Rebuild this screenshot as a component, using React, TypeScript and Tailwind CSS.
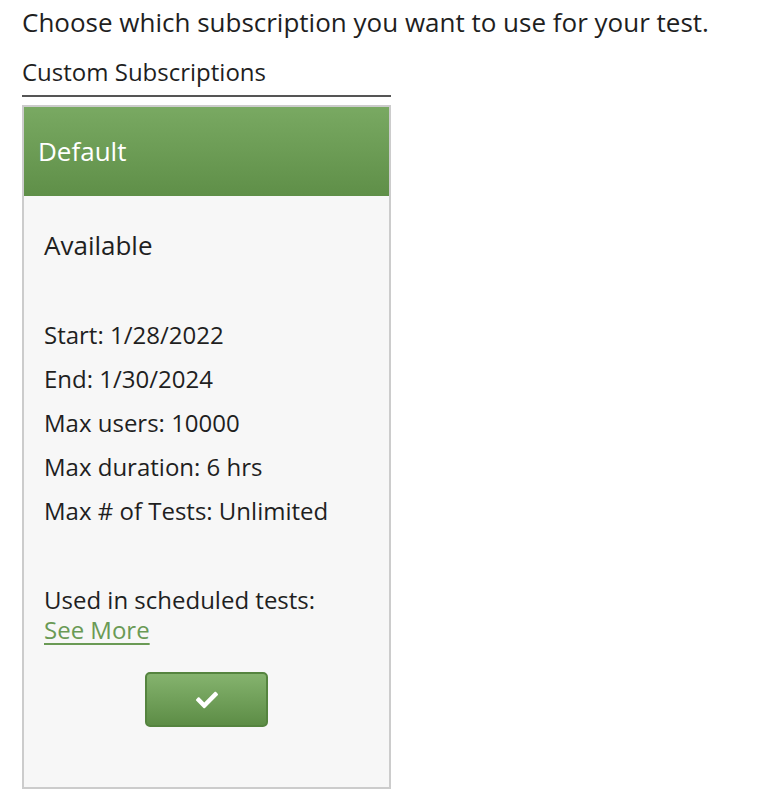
import React from "react";
import { FaCheck } from "react-icons/fa";

export default function App() {
  const rows = [
    "Start: 1/28/2022",
    "End: 1/30/2024",
    "Max users: 10000",
    "Max duration: 6 hrs",
    "Max # of Tests: Unlimited",
  ];
  return (
    <div className="min-h-[808px] w-[780px] bg-white text-[#1f1f1f] font-['Open_Sans',sans-serif]">
      <div className="px-[22px] pt-[5px]">
        <p className="text-[26px] leading-[34px] whitespace-nowrap">
          Choose which subscription you want to use for your test.
        </p>
        <div className="mt-[17px] w-[369px]">
          <div className="text-[24px] leading-[32px] pb-[7px] border-b-2 border-[#555]">
            Custom Subscriptions
          </div>
          <div className="mt-[8px] border-2 border-[#cccccc] bg-[#f7f7f7] h-[684px] flex flex-col">
            <div className="h-[89px] flex items-center px-[14px] pb-[1px] bg-gradient-to-b from-[#79a962] to-[#5f8f48] text-white text-[26px]">
              Default
            </div>
            <div className="px-[20px] pt-[31px]">
              <div className="text-[26px] leading-[36px]">Available</div>
              <div className="mt-[50px] flex flex-col">
                {rows.map((r) => (
                  <div key={r} className="text-[24px] leading-[44px]">
                    {r}
                  </div>
                ))}
              </div>
              <div className="mt-[52px] text-[24px] leading-[30px]">
                Used in scheduled tests:
              </div>
              <a className="text-[24px] leading-[30px] text-[#6a9a55] underline underline-offset-[4px]">
                See More
              </a>
              <div className="mt-[27px] flex justify-center">
                <button className="w-[123px] h-[55px] rounded-[5px] border-2 border-[#55843f] bg-gradient-to-b from-[#85b36e] to-[#5d8d46] flex items-center justify-center text-white">
                  <FaCheck size={22} />
                </button>
              </div>
            </div>
          </div>
        </div>
      </div>
    </div>
  );
}
